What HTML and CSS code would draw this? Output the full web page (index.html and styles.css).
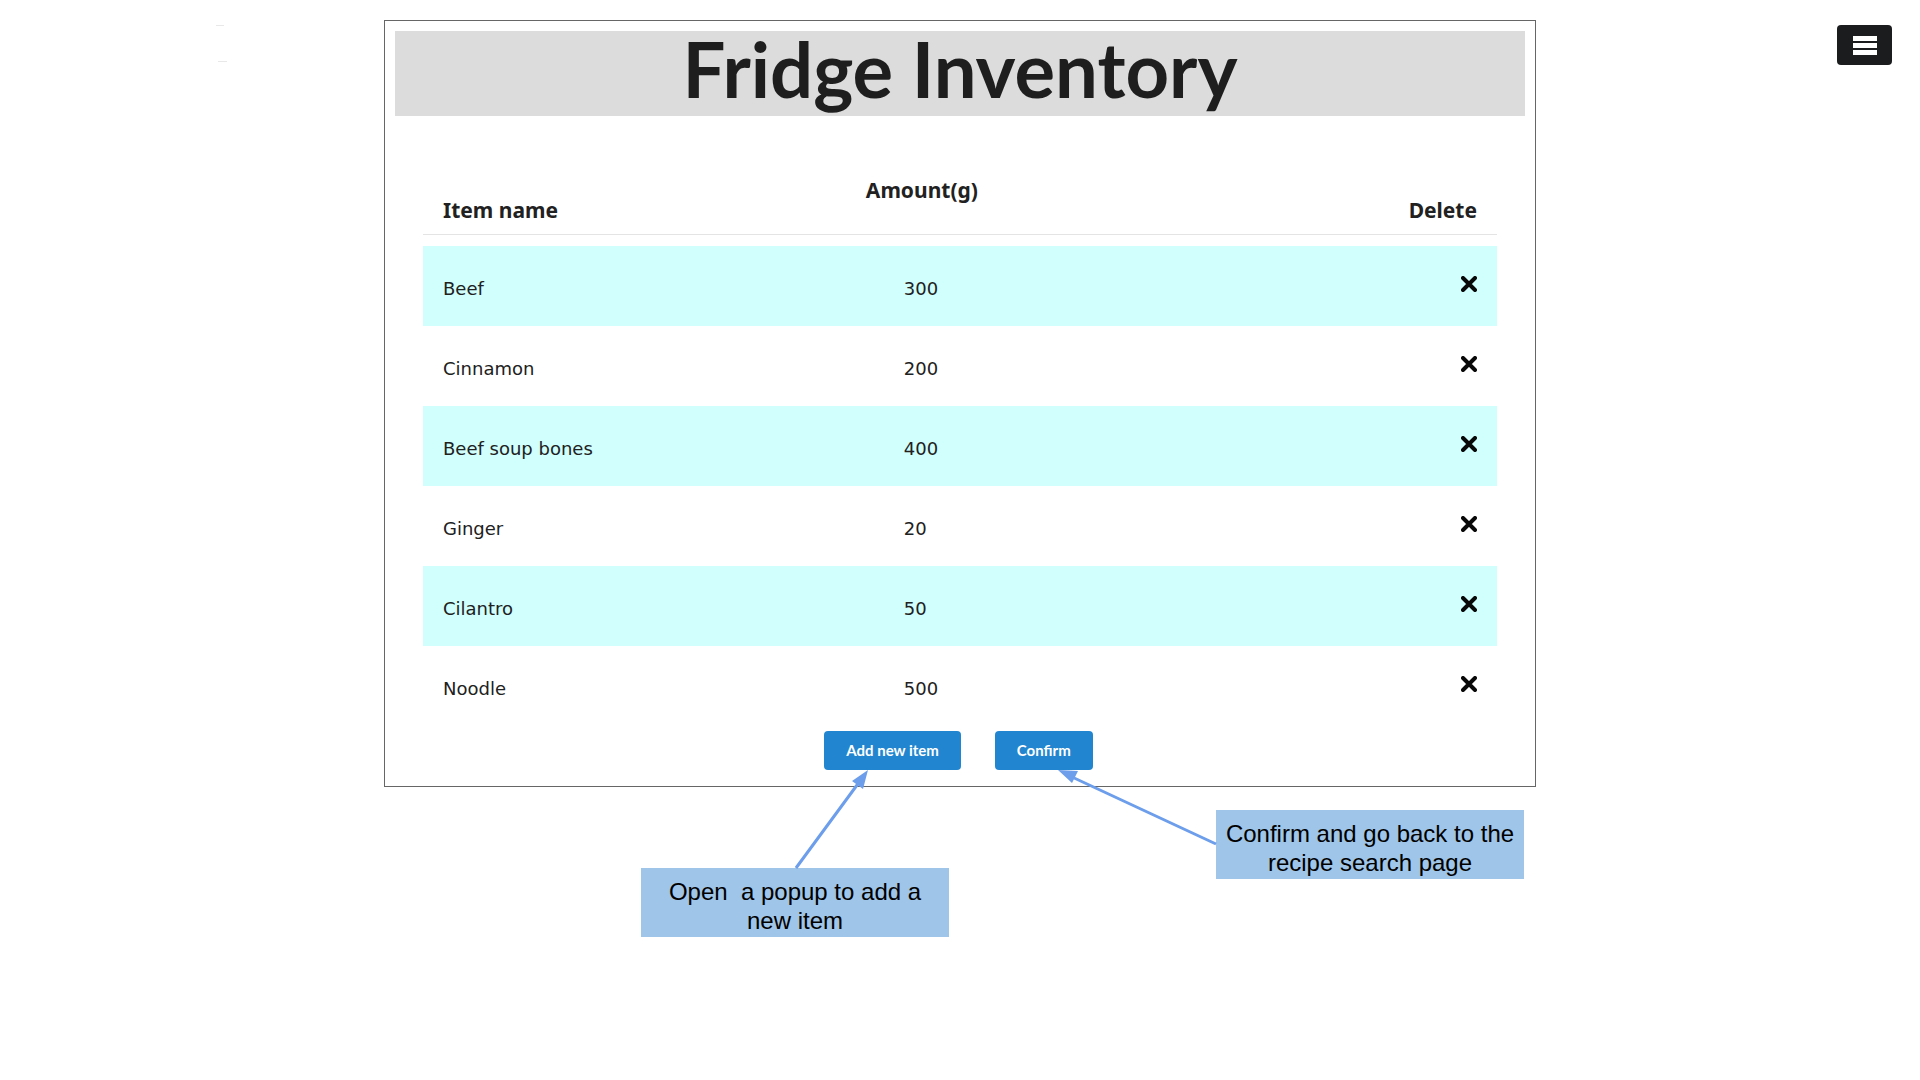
FILE: index.html
```html
<!DOCTYPE html>
<html lang="en">
<head>
<meta charset="utf-8">
<title>Fridge Inventory</title>
<link rel="stylesheet" href="styles.css">
</head>
<body>
<svg class="brand-mark" viewBox="0 0 16 40" aria-hidden="true"><path d="M0 1h8v1H0z M2 37h9v1H2z"/></svg>
<button class="menu-button" type="button" aria-label="Menu">
  <svg viewBox="0 0 24 19" aria-hidden="true"><path d="M0 0h24v5H0z M0 7h24v5H0z M0 14h24v5H0z"/></svg>
</button>
<main class="page">
  <section class="card">
    <h1 class="title">Fridge Inventory</h1>
    <table class="inventory">
      <thead>
        <tr><th class="name" scope="col">Item name</th><th class="amount" scope="col">Amount(g)</th><th class="delete" scope="col">Delete</th></tr>
      </thead>
      <tbody>
        <tr><td class="name">Beef</td><td class="amount">300</td><td class="delete"><button class="remove" type="button" aria-label="Delete Beef"><svg viewBox="0 0 16 16" aria-hidden="true"><path d="M2 2l12 12M14 2L2 14"/></svg></button></td></tr>
        <tr><td class="name">Cinnamon</td><td class="amount">200</td><td class="delete"><button class="remove" type="button" aria-label="Delete Cinnamon"><svg viewBox="0 0 16 16" aria-hidden="true"><path d="M2 2l12 12M14 2L2 14"/></svg></button></td></tr>
        <tr><td class="name">Beef soup bones</td><td class="amount">400</td><td class="delete"><button class="remove" type="button" aria-label="Delete Beef soup bones"><svg viewBox="0 0 16 16" aria-hidden="true"><path d="M2 2l12 12M14 2L2 14"/></svg></button></td></tr>
        <tr><td class="name">Ginger</td><td class="amount">20</td><td class="delete"><button class="remove" type="button" aria-label="Delete Ginger"><svg viewBox="0 0 16 16" aria-hidden="true"><path d="M2 2l12 12M14 2L2 14"/></svg></button></td></tr>
        <tr><td class="name">Cilantro</td><td class="amount">50</td><td class="delete"><button class="remove" type="button" aria-label="Delete Cilantro"><svg viewBox="0 0 16 16" aria-hidden="true"><path d="M2 2l12 12M14 2L2 14"/></svg></button></td></tr>
        <tr><td class="name">Noodle</td><td class="amount">500</td><td class="delete"><button class="remove" type="button" aria-label="Delete Noodle"><svg viewBox="0 0 16 16" aria-hidden="true"><path d="M2 2l12 12M14 2L2 14"/></svg></button></td></tr>
      </tbody>
    </table>
    <div class="actions">
      <button class="action" type="button">Add new item</button>
      <button class="action" type="button">Confirm</button>
    </div>
  </section>
  <section class="notes">
    <svg class="arrows" viewBox="0 0 600 100" aria-hidden="true">
      <path class="line" d="M136 98L200 11M556 74L412 7"/>
      <path class="head" d="M208 0L192 11L203 19z M398 0L418 1L412 13z"/>
    </svg>
    <p class="note note-add">Open&nbsp; a popup to add a<br>new item</p>
    <p class="note">Confirm and go back to the<br>recipe search page</p>
  </section>
</main>
</body>
</html>
```
FILE: styles.css
```css
* { box-sizing: border-box; }
body { margin: 0; background: #fff; color: #212121; font-family: "DejaVu Sans", sans-serif; }
button { border: 0; padding: 0; cursor: pointer; }
.brand-mark { position: absolute; top: 24px; left: 216px; width: 16px; height: 40px; fill: #e8e8e8; }
.menu-button { position: absolute; top: 25px; right: 28px; display: flex; align-items: center; justify-content: center; width: 55px; height: 40px; border-radius: 4px; background: #1b1c1d; }
.menu-button svg { width: 24px; height: 19px; fill: #fff; }
.page { padding-top: 20px; }
.card { width: 60%; min-width: 640px; margin: 0 auto; padding: 10px 10px 16px; border: 1px solid #666; }
.title { margin: 0; padding-bottom: 10px; background: #dcdcdc; color: #1e1e1e; font: bold 76px/75px Lato, sans-serif; text-align: center; }
.inventory { width: calc(100% - 56px); margin: 56px 28px 0; border-collapse: collapse; table-layout: fixed; }
.inventory th { height: 62px; padding: 3px 20px 9px; border-bottom: 1px solid #e4e4e4; font: bold 21px/30px "Noto Sans", sans-serif; text-align: left; vertical-align: bottom; }
.inventory th.amount { padding-left: 24px; vertical-align: top; }
.inventory tbody::before { content: ""; display: table-row; height: 12px; }
.inventory tbody tr:nth-child(odd) { background: #d0fffe; }
.inventory td { height: 80px; padding: 6px 20px 0; font-size: 18px; line-height: 24px; }
.inventory .name { width: 39%; }
.inventory td.amount { padding-left: 62px; }
.inventory .delete { width: 20%; text-align: right; }
.inventory td.delete { padding-top: 0; padding-bottom: 4px; }
.remove { display: block; width: 16px; height: 16px; margin-left: auto; background: none; }
.remove svg { display: block; width: 16px; height: 16px; fill: none; stroke: #080808; stroke-width: 4; stroke-linecap: round; }
.actions { display: flex; justify-content: center; gap: 34px; margin-top: 5px; padding-right: 3px; }
.action { height: 39px; padding: 0 22px 2px; border-radius: 4px; background: #2185d0; color: #fff; font: bold 15px/20px Lato, sans-serif; }
.notes { position: relative; display: flex; align-items: flex-start; justify-content: center; gap: 267px; padding: 23px 0 0 245px; }
.arrows { position: absolute; top: -17px; left: calc(50% - 300px); width: 600px; height: 100px; }
.arrows .line { fill: none; stroke: #6d9eeb; stroke-width: 3; }
.arrows .head { fill: #6d9eeb; }
.note { width: 308px; margin: 0; padding: 9px 0 2px; background: #9fc5e8; color: #000; font: 24px/29px "Liberation Sans", sans-serif; text-align: center; white-space: nowrap; }
.note-add { margin-top: 58px; }
```
